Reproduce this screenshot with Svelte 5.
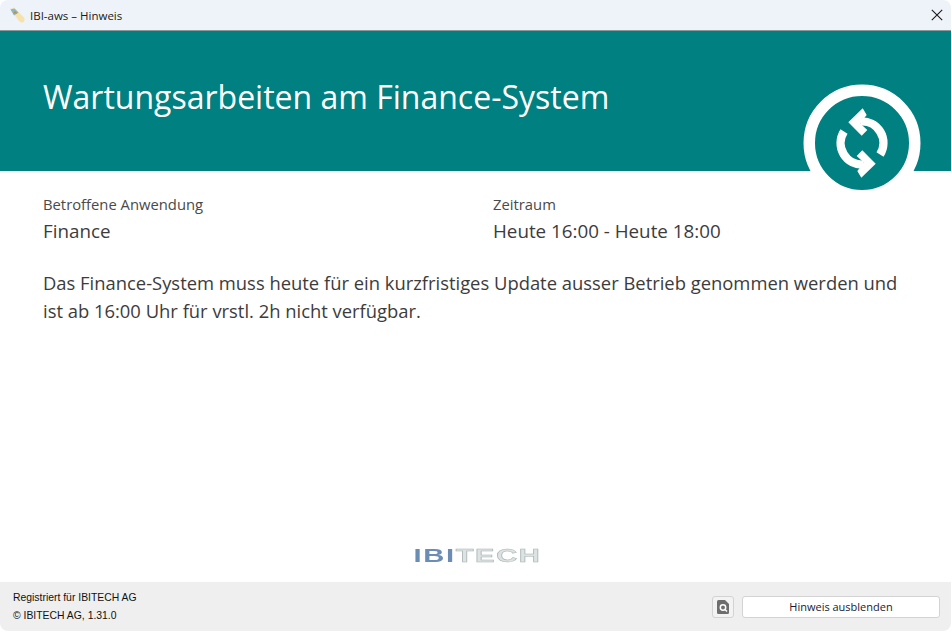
<script>
  const app = "Finance";
  const period = "Heute 16:00 - Heute 18:00";
</script>

<div class="window">
  <div class="titlebar">
    <svg class="app-icon" width="16" height="16" viewBox="0 0 16 16" aria-hidden="true">
      <path d="M1 2 L5 0.500 L15.500 11 Q16 14 14 15.500 Q11.500 16 10 14 Z" fill="#f5e2ae" />
      <path d="M1.500 2.500 L5.500 1.500 L9.500 5.500 L5 8.500 Z" fill="#8fb2cf" />
      <path d="M4 6.500 L6 4 L8.500 6.500 Z" fill="#b8973a" />
    </svg>
    <span class="title">IBI-aws – Hinweis</span>
    <svg class="close" width="12" height="12" viewBox="0 0 12 12" aria-hidden="true">
      <path d="M.8 .8 L11.200 11.200 M11.200 .8 L.8 11.200" stroke="#1a1a1a" stroke-width="1.100" fill="none" />
    </svg>
  </div>

  <header>
    <h1>Wartungsarbeiten am Finance-System</h1>
    <div class="badge">
      <svg width="118" height="118" viewBox="0 0 118 118" aria-hidden="true">
        <circle cx="59" cy="59" r="52.750" fill="#008080" stroke="#fff" stroke-width="11.500" />
        <g fill="none" stroke="#fff" stroke-width="8.400">
          <path d="M57 37.500 A 21.500 21.500 0 0 1 77 70.500" />
          <path d="M61 80.500 A 21.500 21.500 0 0 1 41 47.500" />
        </g>
        <path d="M59.700 24.300 L45.300 38.300 L58.700 51.700 L64.300 46 L57 39.300 L63.700 31 Z" fill="#fff" />
        <path d="M58.300 93.700 L72.700 79.700 L59.300 66.300 L53.700 72 L61 78.700 L54.300 87 Z" fill="#fff" />
      </svg>
    </div>
  </header>

  <main>
    <div class="facts">
      <div>
        <div class="label">Betroffene Anwendung</div>
        <div class="value">{app}</div>
      </div>
      <div>
        <div class="label">Zeitraum</div>
        <div class="value">{period}</div>
      </div>
    </div>
    <p>Das Finance-System muss heute für ein kurzfristiges Update ausser Betrieb genommen werden und ist ab 16:00 Uhr für vrstl. 2h nicht verfügbar.</p>
  </main>

  <div class="logo"><span class="ibi">IBI</span><span class="tech">TECH</span></div>

  <footer>
    <div class="legal">
      <div>Registriert für IBITECH AG</div>
      <div>© IBITECH AG, 1.31.0</div>
    </div>
    <div class="actions">
      <button class="preview" aria-label="Vorschau">
        <svg width="12" height="14" viewBox="0 0 12 14" aria-hidden="true">
          <path d="M0 1.500 Q0 0 1.500 0 H8 L12 4 V12.500 Q12 14 10.500 14 H1.500 Q0 14 0 12.500 Z" fill="#6e6e6e" />
          <circle cx="6" cy="7.500" r="2.700" fill="none" stroke="#fff" stroke-width="1.500" />
          <path d="M8 9.500 L10 11.500" stroke="#fff" stroke-width="1.500" />
        </svg>
      </button>
      <button class="hide">Hinweis ausblenden</button>
    </div>
  </footer>
</div>

<style>
  :global(body) {
    background: #fff;
  }

  .window {
    position: relative;
    width: 951px;
    height: 631px;
    display: flex;
    flex-direction: column;
    background: #fff;
    border-radius: 8px;
    overflow: hidden;
    font-family: "Open Sans", sans-serif;
    color: #3c3c3c;
  }

  .titlebar {
    flex: 0 0 31px;
    box-sizing: border-box;
    display: flex;
    align-items: center;
    padding: 0 8px 0 9px;
    background: #eef3f9;
    border-bottom: 1px solid #8a9a9c;
    font-size: 11.500px;
    color: #1a1a1a;
  }

  .app-icon {
    margin-right: 5px;
  }

  .title {
    flex: 1;
  }

  header {
    position: relative;
    flex: 0 0 140px;
    box-sizing: border-box;
    padding: 44px 43px 0;
    background: #008080;
  }

  h1 {
    margin: 0;
    font-size: 32px;
    line-height: 44px;
    font-weight: 400;
    color: #fff;
  }

  .badge {
    position: absolute;
    left: 803px;
    top: 53px;
    line-height: 0;
  }

  main {
    flex: 1;
    padding: 23px 43px 0;
  }

  .facts {
    display: grid;
    grid-template-columns: 450px 1fr;
  }

  .label {
    font-size: 14.800px;
    line-height: 20px;
    color: #4a4a4a;
  }

  .value {
    margin-top: 4px;
    font-size: 18.800px;
    line-height: 26px;
  }

  p {
    margin: 25px 0 0;
    font-size: 18.400px;
    line-height: 28px;
  }

  .logo {
    align-self: center;
    margin: 0 0 17px 4px;
    font-family: "Liberation Sans", sans-serif;
    font-weight: 700;
    font-size: 18px;
    line-height: 18px;
    letter-spacing: 1px;
    transform: scaleX(1.620);
    filter: blur(0.4px);
  }

  .ibi {
    color: #6b8cb5;
  }

  .tech {
    color: #dde2e2;
    -webkit-text-stroke: 0.5px #a9b4b4;
  }

  footer {
    flex: 0 0 49px;
    display: flex;
    align-items: center;
    justify-content: space-between;
    padding: 0 11px 0 13px;
    background: #efefef;
    font-family: "Liberation Sans", sans-serif;
    font-size: 10.400px;
  }

  .legal {
    color: #111;
    line-height: 18px;
  }

  .actions {
    display: flex;
    gap: 8px;
  }

  button {
    height: 22px;
    padding: 0;
    box-sizing: border-box;
    background: #fff;
    border: 1px solid #d3d3d3;
    border-radius: 3px;
    font-family: "Open Sans", sans-serif;
    font-size: 11px;
    color: #1a1a2e;
    display: flex;
    align-items: center;
    justify-content: center;
  }

  .preview {
    width: 22px;
    background: #f3f3f3;
  }

  .hide {
    width: 198px;
  }
</style>
